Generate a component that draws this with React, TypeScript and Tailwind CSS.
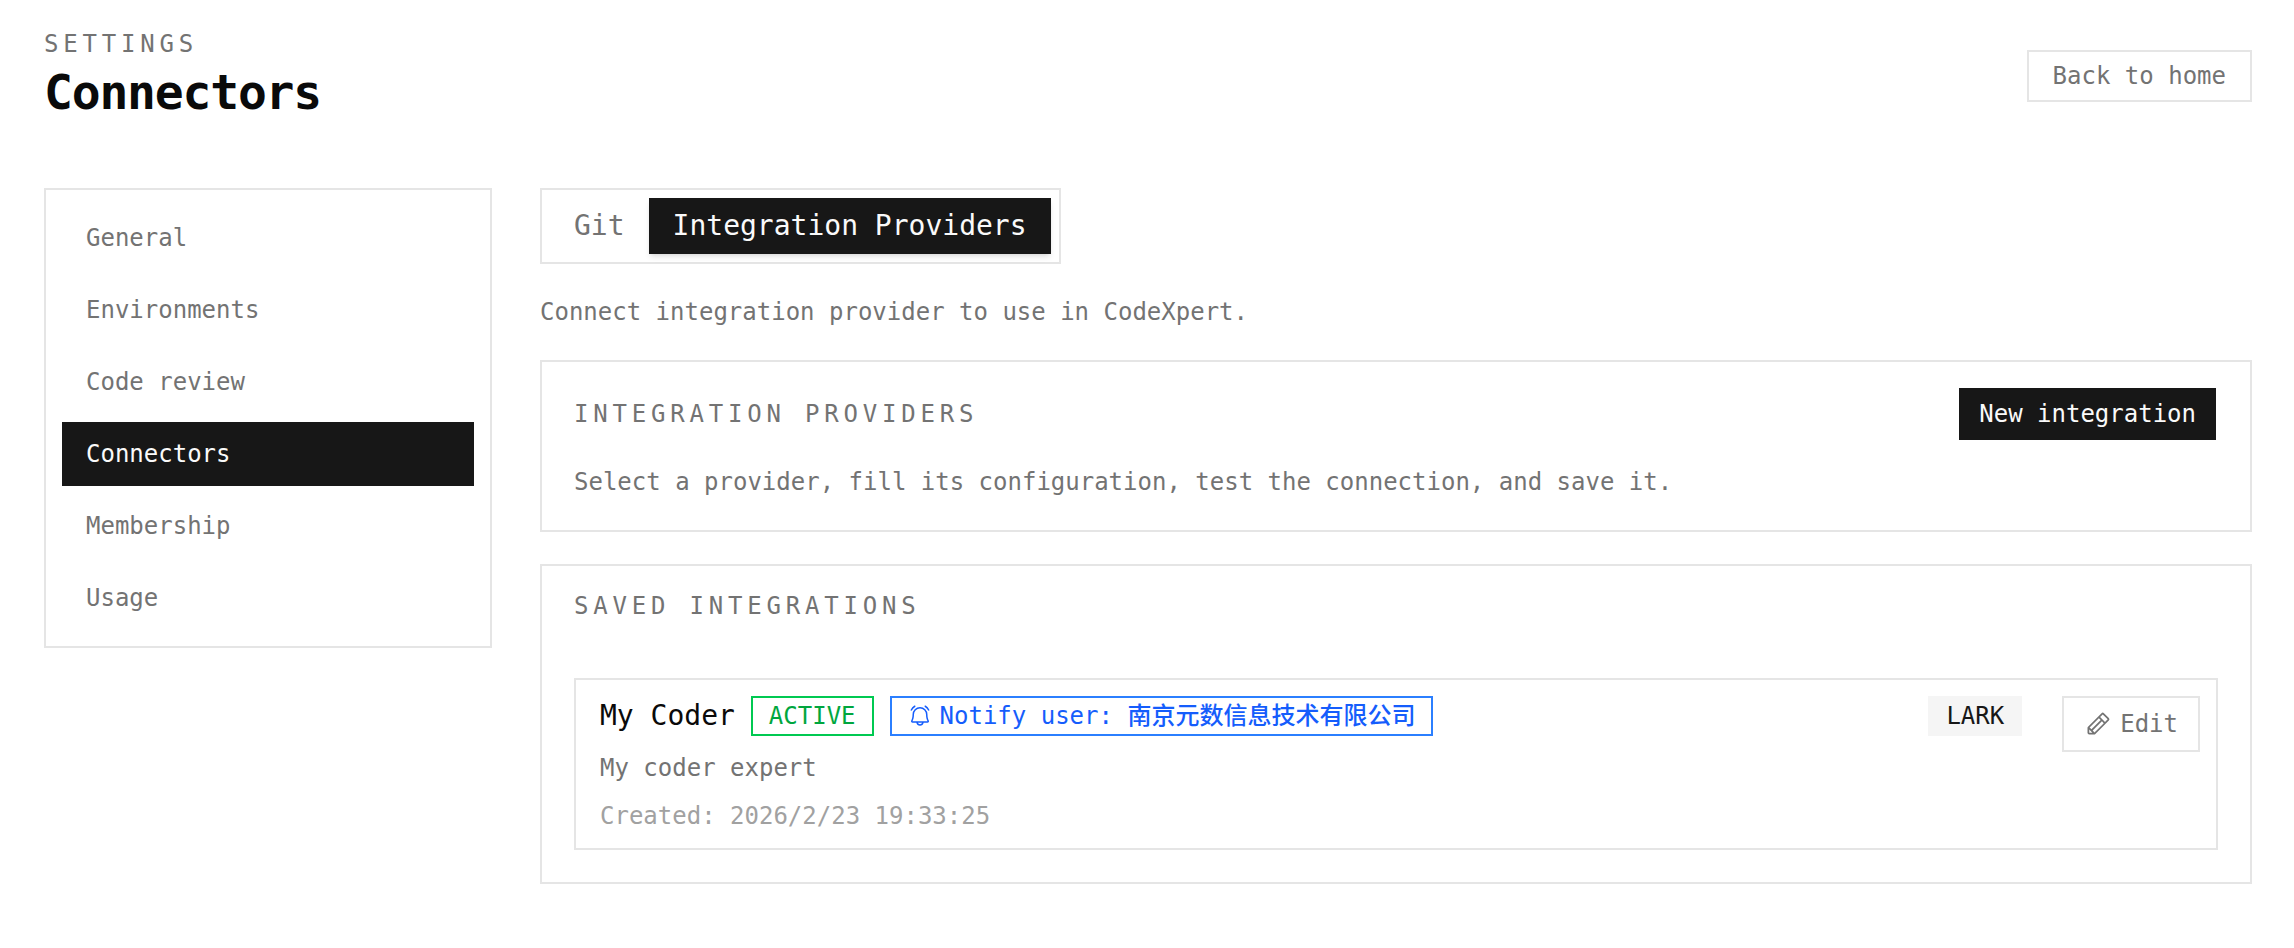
import { useState } from "react";
import { PiBellRinging, PiPencil } from "react-icons/pi";

const navItems = [
  "General",
  "Environments",
  "Code review",
  "Connectors",
  "Membership",
  "Usage",
];

const tabs = ["Git", "Integration Providers"];

function Sidebar() {
  return (
    <nav className="flex w-[448px] shrink-0 flex-col gap-2 border-2 border-neutral-200 p-4">
      {navItems.map((item) => (
        <a
          key={item}
          href="#"
          className={
            item === "Connectors"
              ? "bg-neutral-900 px-6 py-4 text-neutral-50"
              : "px-6 py-4 text-neutral-500"
          }
        >
          {item}
        </a>
      ))}
    </nav>
  );
}

function Tabs() {
  const [active, setActive] = useState("Integration Providers");

  return (
    <div role="tablist" className="flex border-2 border-neutral-200 p-2">
      {tabs.map((tab) => (
        <button
          key={tab}
          type="button"
          role="tab"
          aria-selected={tab === active}
          onClick={() => setActive(tab)}
          className={
            tab === active
              ? "h-14 bg-neutral-900 px-6 text-[28px] leading-10 text-neutral-50 shadow-md"
              : "h-14 px-6 text-[28px] leading-10 text-neutral-500"
          }
        >
          {tab}
        </button>
      ))}
    </div>
  );
}

function IntegrationCard() {
  return (
    <article className="flex items-start justify-between gap-10 border-2 border-neutral-200 py-4 pr-4 pl-6">
      <div className="flex flex-col gap-4">
        <div className="flex items-center gap-4">
          <h3 className="text-[28px] leading-10">My Coder</h3>
          <span className="flex h-10 items-center border-2 border-green-500 px-4 text-green-600">
            ACTIVE
          </span>
          <span className="flex h-10 items-center gap-2 border-2 border-blue-500 px-4 text-blue-600">
            <PiBellRinging className="size-6" />
            <span>
              Notify user:{" "}
              <span lang="zh-CN" className="font-medium">
                南京元数信息技术有限公司
              </span>
            </span>
          </span>
        </div>
        <p className="text-neutral-500">My coder expert</p>
        <p className="text-neutral-400">Created: 2026/2/23 19:33:25</p>
      </div>
      <div className="flex items-start gap-10">
        <span className="flex h-10 items-center bg-neutral-100 px-[18px] text-neutral-900">
          LARK
        </span>
        <button
          type="button"
          className="flex h-14 items-center gap-2 border-2 border-neutral-200 px-5 text-neutral-500"
        >
          <PiPencil className="size-7" />
          Edit
        </button>
      </div>
    </article>
  );
}

export default function App() {
  return (
    <div className="min-h-screen bg-white pt-7 pr-[42px] pb-16 pl-11 font-['DejaVu_Sans_Mono','Noto_Sans_CJK_SC',monospace] text-[24px] leading-8 text-neutral-950">
      <header className="flex items-center justify-between">
        <div>
          <p className="tracking-[0.2em] text-neutral-500">SETTINGS</p>
          <h1 className="text-5xl leading-16 font-bold tracking-tight">
            Connectors
          </h1>
        </div>
        <a
          href="#"
          className="border-2 border-neutral-200 px-6 py-2 text-neutral-500"
        >
          Back to home
        </a>
      </header>

      <div className="mt-16 flex items-start gap-12">
        <Sidebar />
        <main className="flex min-w-0 flex-1 flex-col items-start gap-8">
          <Tabs />
          <p className="text-neutral-500">
            Connect integration provider to use in CodeXpert.
          </p>

          <section className="flex w-full flex-col gap-6 border-2 border-neutral-200 px-8 pt-6 pb-8">
            <div className="flex items-center justify-between">
              <h2 className="tracking-[0.2em] text-neutral-500">
                INTEGRATION PROVIDERS
              </h2>
              <button
                type="button"
                className="h-14 border-2 border-transparent bg-neutral-900 bg-clip-padding px-5 text-neutral-50"
              >
                New integration
              </button>
            </div>
            <p className="text-neutral-500">
              Select a provider, fill its configuration, test the connection,
              and save it.
            </p>
          </section>

          <section className="flex w-full flex-col gap-14 border-2 border-neutral-200 px-8 pt-6 pb-8">
            <h2 className="tracking-[0.2em] text-neutral-500">
              SAVED INTEGRATIONS
            </h2>
            <IntegrationCard />
          </section>
        </main>
      </div>
    </div>
  );
}
